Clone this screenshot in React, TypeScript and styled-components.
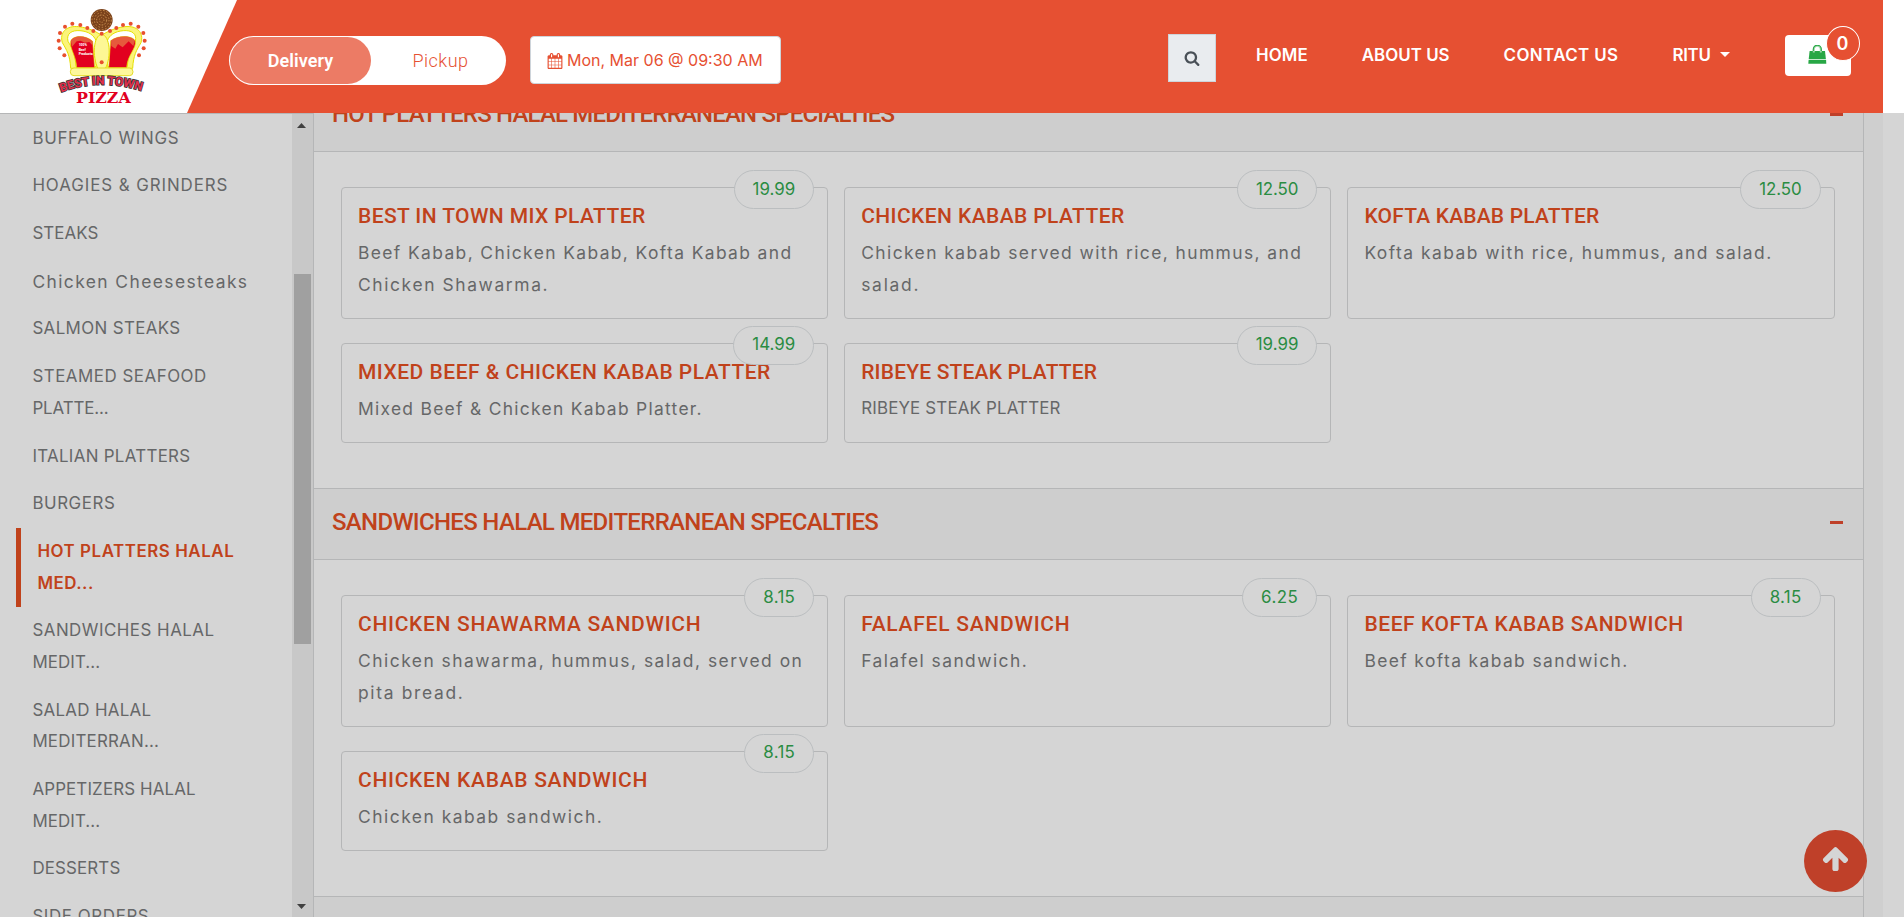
import React from 'react';
import styled, { createGlobalStyle, css } from 'styled-components';

const color = {
  brand: '#e65032',
  brandDim: '#bf4029',
  heading: '#c0421b',
  page: '#d5d5d5',
  bar: '#cecece',
  line: '#b5b6b7',
  text: '#666768',
  green: '#2a8c42',
};

const GlobalStyle = createGlobalStyle`
  *, *::before, *::after { box-sizing: border-box; }
  html, body { margin: 0; padding: 0; }
  body {
    background: ${color.page};
    font-family: Inter, 'Open Sans', sans-serif;
    overflow: hidden;
  }
`;

const Page = styled.div`
  display: flex;
  flex-direction: column;
  width: 1904px;
  height: 917px;
  overflow: hidden;
`;

/* ---------- header ---------- */

const HeaderStrip = styled.header`
  flex: none;
  height: 113px;
  padding-right: 21px;
  background: #fff;
`;

const HeaderBar = styled.div`
  display: flex;
  align-items: flex-start;
  height: 100%;
  background: ${color.brand};
`;

const LogoPanel = styled.div`
  flex: none;
  width: 237px;
  height: 113px;
  padding-left: 50px;
  background: #fff;
  clip-path: polygon(0 0, 100% 0, 187px 100%, 0 100%);
  margin-right: -8px;
`;

const Toggle = styled.div`
  z-index: 1;
  display: flex;
  width: 277px;
  height: 49px;
  margin-top: 36px;
  padding: 1px;
  border-radius: 25px;
  background: #fff;
`;

const ToggleOption = styled.div<{ $active?: boolean }>`
  display: flex;
  flex: none;
  align-items: center;
  justify-content: center;
  width: ${p => (p.$active ? 141 : 139)}px;
  height: 47px;
  padding-bottom: 1px;
  border-radius: 24px;
  font-family: Roboto, sans-serif;
  font-size: 18px;
  font-weight: ${p => (p.$active ? 600 : 300)};
  letter-spacing: ${p => (p.$active ? 0.1 : 0.48)}px;
  color: ${p => (p.$active ? '#fff' : color.brand)};
  background: ${p => (p.$active ? '#ec7b65' : 'transparent')};
`;

const DateButton = styled.div`
  display: flex;
  align-items: center;
  gap: 4px;
  width: 251px;
  height: 48px;
  margin: 36px 0 0 24px;
  padding: 0 0 1px 16px;
  border: 1px solid #ced4da;
  border-radius: 4px;
  background: #fff;
  color: ${color.brand};
  font-size: 16px;
  white-space: nowrap;

  svg { margin-top: 3px; }
`;

const SearchButton = styled.div`
  display: flex;
  align-items: center;
  justify-content: center;
  width: 48px;
  height: 48px;
  margin: 34px 40px 0 387px;
  border: 1px solid #ced4da;
  background: #e9ecef;
  color: #495057;
`;

const Nav = styled.nav`
  display: flex;
  gap: 54px;
  width: 529px;
  margin-top: 43px;
`;

const NavItem = styled.span<{ $track: number }>`
  display: flex;
  align-items: center;
  height: 24px;
  font-size: 16.9px;
  font-weight: 600;
  letter-spacing: ${p => p.$track}px;
  white-space: nowrap;
  color: #fff;
`;

const Caret = styled.i`
  margin: 0 0 1px 9px;
  border: 5px solid transparent;
  border-top-color: #fff;
  border-bottom: 0;
`;

const CartButton = styled.div`
  position: relative;
  width: 66px;
  height: 41px;
  margin-top: 35px;
  padding: 10px 0 0 23px;
  border-radius: 4px;
  background: #fff;
`;

const CartBadge = styled.span`
  position: absolute;
  top: -9px;
  right: -9px;
  display: flex;
  align-items: center;
  justify-content: center;
  width: 34px;
  height: 35px;
  padding-right: 1px;
  border: 1px solid #fff;
  border-radius: 50%;
  background: ${color.brand};
  color: #fff;
  font-size: 18px;
  font-weight: 600;
`;

/* ---------- body ---------- */

const Body = styled.div`
  display: flex;
  flex: 1;
  min-height: 0;
`;

const Sidebar = styled.aside`
  display: flex;
  flex: none;
  width: 313px;
  border-top: 1px solid ${color.line};
`;

const CategoryList = styled.ul`
  flex: none;
  width: 292px;
  margin: 0;
  padding: 0.7px 0 0 16px;
  list-style: none;
  overflow: hidden;
`;

const Category = styled.li<{ $active?: boolean }>`
  padding: 8px 0 8px 16.4px;
  font-size: 16.9px;
  line-height: 31.68px;
  color: ${color.text};
  ${p =>
    p.$active &&
    css`
      border-left: 5px solid ${color.heading};
      font-weight: 600;
      color: ${color.heading};
    `}
`;

const Line = styled.span<{ $track: number; $size?: number }>`
  display: block;
  letter-spacing: ${p => p.$track}px;
  font-size: ${p => p.$size ?? 16.9}px;
  white-space: nowrap;
`;

const ScrollTrack = styled.div`
  display: flex;
  flex-direction: column;
  align-items: center;
  width: 21px;
  padding: 9px 2px 8px 0;
  background: #c8c8c8;
`;

const ScrollArrow = styled.i<{ $down?: boolean }>`
  width: 9px;
  height: 5px;
  background: #404040;
  clip-path: ${p => (p.$down ? 'polygon(0 0, 100% 0, 50% 100%)' : 'polygon(50% 0, 100% 100%, 0 100%)')};
`;

const ScrollThumb = styled.div`
  width: 17px;
  height: 370px;
  margin: 146px 0 auto 2px;
  background: #a0a0a0;
`;

const Panel = styled.main`
  flex: none;
  width: 1551px;
  border: solid ${color.line};
  border-width: 0 1px;
  overflow: hidden;
`;

const Sections = styled.div`
  margin-top: -33px;
`;

const Gutter = styled.div`
  width: 19px;
  background: #cfcfcf;
`;

const Section = styled.section`
  height: 408px;
`;

const SectionHeader = styled.div`
  display: flex;
  align-items: center;
  justify-content: space-between;
  height: 72px;
  padding: 0 20.5px 4px 18px;
  border: solid ${color.line};
  border-width: 1px 0;
  background: ${color.bar};
`;

const SectionTitle = styled.h2<{ $track: number }>`
  margin: 0;
  font-family: Roboto, sans-serif;
  font-size: 24px;
  font-weight: 500;
  letter-spacing: ${p => p.$track}px;
  white-space: nowrap;
  color: ${color.heading};
`;

const Minus = styled.i`
  width: 12.5px;
  height: 3.5px;
  margin-top: 1px;
  background: ${color.brandDim};
`;

const CardGrid = styled.div`
  display: grid;
  grid-template-columns: repeat(3, 487.2px);
  gap: 24px 16px;
  padding: 35px 0 0 27px;
`;

const Card = styled.article`
  position: relative;
  padding: 16px 14px 17.5px 16px;
  border: 1px solid ${color.line};
  border-radius: 4px;
`;

const CardTitle = styled.h3<{ $track: number }>`
  margin: 0 0 9px;
  font-family: Roboto, sans-serif;
  font-size: 21px;
  font-weight: 500;
  line-height: 24px;
  letter-spacing: ${p => p.$track}px;
  white-space: nowrap;
  color: ${color.heading};
`;

const CardText = styled.div`
  line-height: 31.68px;
  color: ${color.text};
`;

const Price = styled.span<{ $track: number }>`
  position: absolute;
  top: -18px;
  right: 13px;
  display: flex;
  align-items: center;
  height: 39px;
  padding: 0 18px 2px;
  border: 1px solid #bbbec0;
  border-radius: 20px;
  background: ${color.page};
  font-size: 16.9px;
  letter-spacing: ${p => p.$track}px;
  color: ${color.green};
`;

const ToTop = styled.div`
  position: absolute;
  left: 1804px;
  top: 830px;
  display: flex;
  align-items: center;
  justify-content: center;
  width: 63px;
  height: 62px;
  padding-bottom: 6px;
  border-radius: 50%;
  background: ${color.brandDim};
  color: ${color.page};
`;

/* ---------- drawings ---------- */

const Logo = () => (
  <svg width="110" height="113" viewBox="0 0 330 339">
    <path d="M62 205 C60 165 50 150 37 128 C28 98 48 76 86 80 C118 84 140 96 155 106 C170 96 192 84 224 80 C262 76 282 98 273 128 C260 150 250 165 248 205 Z" fill="#fbf47a" stroke="#e6e000" strokeWidth="3" />
    <path d="M78 200 C76 160 64 140 54 124 C48 100 66 90 90 92 C116 94 132 106 138 122 L138 200 Z" fill="#fff" stroke="#e6e000" strokeWidth="3" />
    <path d="M232 200 C234 160 246 140 256 124 C262 100 244 90 220 92 C194 94 178 106 172 122 L172 200 Z" fill="#fff" stroke="#e6e000" strokeWidth="3" />
    <path d="M80 203 C78 165 58 145 62 124 C66 106 108 104 128 124 L134 203 Z" fill="#e2001f" stroke="#e6e000" strokeWidth="2" />
    <path d="M230 203 C232 165 260 145 256 124 C250 106 206 104 182 122 L176 203 Z" fill="#e2001f" stroke="#e6e000" strokeWidth="2" />
    <path d="M63 124 C68 106 108 104 127 124 L127 136 L118 126 L104 128 L92 122 L80 124 L66 140 Z" fill="#e65a3c" />
    <path d="M254 124 C248 106 206 104 183 122 L184 138 L196 146 L204 132 L218 142 L236 124 L250 138 Z" fill="#e65a3c" />
    <path d="M155 103 C180 106 185 170 166 206 L144 206 C126 170 130 106 155 103 Z" fill="#fdf795" stroke="#e6e000" strokeWidth="3" />
    <rect x="61" y="204" width="188" height="23" rx="11" fill="#fdf79c" stroke="#e3dc28" strokeWidth="3" />
    <circle cx="155" cy="60" r="33" fill="#7a421b" />
    <circle cx="155" cy="60" r="29" fill="none" stroke="#c98d4d" strokeWidth="3" strokeDasharray="5 5" />
    <circle cx="155" cy="60" r="22" fill="none" stroke="#c98d4d" strokeWidth="3" strokeDasharray="4 6" />
    <circle cx="155" cy="60" r="15" fill="none" stroke="#d39a58" strokeWidth="3" strokeDasharray="5 4" />
    <circle cx="155" cy="60" r="7" fill="none" stroke="#c98d4d" strokeWidth="3" strokeDasharray="3 4" />
    <g fill="#e8502d">
      {[[43, 166], [29, 145], [26, 122], [30, 99], [45, 80], [67, 71], [91, 75], [112, 84], [130, 93], [155, 101], [180, 93], [199, 84], [219, 75], [242, 71], [265, 80], [280, 99], [284, 122], [281, 145], [267, 166], [155, 187]].map(([x, y]) => (
        <circle key={`${x}-${y}`} cx={x} cy={y} r="6" />
      ))}
    </g>
    <g fill="#fff" fontFamily="Roboto, sans-serif" fontSize="10" fontWeight="800">
      <text x="86" y="138">100%</text>
      <text x="86" y="152">Beef</text>
      <text x="86" y="166" textLength="42" lengthAdjust="spacingAndGlyphs">Products</text>
    </g>
    <defs>
      <path id="arch" d="M33 277 Q155 232 281 275" />
    </defs>
    <text fill="#e5304c" stroke="#3a3436" strokeWidth="5" paintOrder="stroke" fontFamily="Roboto, sans-serif" fontSize="36" fontWeight="700">
      <textPath href="#arch" textLength="246" lengthAdjust="spacingAndGlyphs">BEST IN TOWN</textPath>
    </text>
    <text x="78" y="308" fill="#e2001f" fontFamily="'DejaVu Serif', serif" fontSize="43" fontWeight="700" textLength="164" lengthAdjust="spacingAndGlyphs">
      PIZZA
    </text>
  </svg>
);

const Glyph = ({ size, d }: { size: number; d: string }) => (
  <svg width={size} height={size} viewBox="0 0 1792 1792" fill="currentColor">
    <path d={d} />
  </svg>
);

const calendarPath =
  'M192 1664h288v-288h-288v288zm352 0h320v-288h-320v288zm-352-352h288v-320h-288v320zm352 0h320v-320h-320v320zm-352-384h288v-288h-288v288zm736 736h320v-288h-320v288zm-384-736h320v-288h-320v288zm768 736h288v-288h-288v288zm-384-352h320v-320h-320v320zm-352-864v-288q0-13-9.5-22.5t-22.5-9.5h-64q-13 0-22.5 9.5t-9.5 22.5v288q0 13 9.5 22.5t22.5 9.5h64q13 0 22.5-9.5t9.5-22.5zm736 864h288v-320h-288v320zm-384-384h320v-288h-320v288zm384 0h288v-288h-288v288zm32-480v-288q0-13-9.5-22.5t-22.5-9.5h-64q-13 0-22.5 9.5t-9.5 22.5v288q0 13 9.5 22.5t22.5 9.5h64q13 0 22.5-9.5t9.5-22.5zm384-64v1280q0 52-38 90t-90 38h-1408q-52 0-90-38t-38-90v-1280q0-52 38-90t90-38h128v-96q0-66 47-113t113-47h64q66 0 113 47t47 113v96h384v-96q0-66 47-113t113-47h64q66 0 113 47t47 113v96h128q52 0 90 38t38 90z';
const searchPath =
  'M1216 832q0-185-131.5-316.5t-316.5-131.5-316.5 131.5-131.5 316.5 131.5 316.5 316.5 131.5 316.5-131.5 131.5-316.5zm512 832q0 52-38 90t-90 38q-54 0-90-38l-343-342q-179 124-399 124-143 0-273.5-55.5t-225-150-150-225-55.5-273.5 55.5-273.5 150-225 225-150 273.5-55.5 273.5 55.5 225 150 150 225 55.5 273.5q0 220-124 399l343 343q37 37 37 90z';
const arrowUpPath =
  'M1675 971q0 51-37 90l-75 75q-38 38-91 38-54 0-90-38l-294-293v704q0 52-37.5 84.5t-90.5 32.5h-128q-53 0-90.5-32.5t-37.5-84.5v-704l-294 293q-36 38-90 38t-90-38l-75-75q-38-38-38-90 0-53 38-91l651-651q35-37 90-37 54 0 91 37l651 651q37 39 37 91z';

const BagIcon = () => (
  <svg width="19" height="19" viewBox="0 0 19 19">
    <path d="M1.6 6H17l.9 8.2H.7Z" fill="#28a745" />
    <path d="M.6 15.1h17.5l.2 3.6H.3Z" fill="#28a745" />
    <path d="M5.8 7.5V4.2a3.5 3.5 0 0 1 7 0V7.5" fill="none" stroke="#9fd8ab" strokeWidth="2" />
    <path d="M5.3 6V4.2a4 4 0 0 1 8 0V6" fill="none" stroke="#28a745" strokeWidth="1.1" />
  </svg>
);

/* ---------- data: every text carries its own tracking ---------- */

type Text = [text: string, track: number];

const nav: Text[] = [['HOME', 0.1], ['ABOUT US', 0.02], ['CONTACT US', 0.4]];

const categories: { lines: Text[]; active?: boolean; size?: number }[] = [
  { lines: [['BUFFALO WINGS', 0.7]] },
  { lines: [['HOAGIES & GRINDERS', 0.93]] },
  { lines: [['STEAKS', 0.1]] },
  { lines: [['Chicken Cheesesteaks', 1.42]], size: 17.4 },
  { lines: [['SALMON STEAKS', 0.38]] },
  { lines: [['STEAMED SEAFOOD', 0.52], ['PLATTE...', -0.1]] },
  { lines: [['ITALIAN PLATTERS', 0.31]] },
  { lines: [['BURGERS', 0.57]] },
  { lines: [['HOT PLATTERS HALAL', 0.56], ['MED...', 0.5]], active: true },
  { lines: [['SANDWICHES HALAL', 0.5], ['MEDIT...', 0.1]] },
  { lines: [['SALAD HALAL', 0.31], ['MEDITERRAN...', 0.22]] },
  { lines: [['APPETIZERS HALAL', 0.15], ['MEDIT...', 0.1]] },
  { lines: [['DESSERTS', 0.15]] },
  { lines: [['SIDE ORDERS', 0.6]] },
];

type Item = { title: Text; price: Text; lines: Text[]; size?: number };

const sections: { title: Text; items: Item[] }[] = [
  {
    title: ['HOT PLATTERS HALAL MEDITERRANEAN SPECIALTIES', -0.81],
    items: [
      { title: ['BEST IN TOWN MIX PLATTER', 0.4], price: ['19.99', 0], lines: [['Beef Kabab, Chicken Kabab, Kofta Kabab and', 1.4], ['Chicken Shawarma.', 1.62]] },
      { title: ['CHICKEN KABAB PLATTER', 0.41], price: ['12.50', -0.06], lines: [['Chicken kabab served with rice, hummus, and', 1.43], ['salad.', 1.75]] },
      { title: ['KOFTA KABAB PLATTER', 0.19], price: ['12.50', -0.06], lines: [['Kofta kabab with rice, hummus, and salad.', 1.47]] },
      { title: ['MIXED BEEF & CHICKEN KABAB PLATTER', 0.5], price: ['14.99', 0], lines: [['Mixed Beef & Chicken Kabab Platter.', 1.3]] },
      { title: ['RIBEYE STEAK PLATTER', 0.18], price: ['19.99', 0], lines: [['RIBEYE STEAK PLATTER', 0.17]], size: 16.9 },
    ],
  },
  {
    title: ['SANDWICHES HALAL MEDITERRANEAN SPECALTIES', -0.68],
    items: [
      { title: ['CHICKEN SHAWARMA SANDWICH', 0.7], price: ['8.15', 0.3], lines: [['Chicken shawarma, hummus, salad, served on', 1.5], ['pita bread.', 1.68]] },
      { title: ['FALAFEL SANDWICH', 0.74], price: ['6.25', 0.5], lines: [['Falafel sandwich.', 1.45]] },
      { title: ['BEEF KOFTA KABAB SANDWICH', 0.57], price: ['8.15', 0.3], lines: [['Beef kofta kabab sandwich.', 1.4]] },
      { title: ['CHICKEN KABAB SANDWICH', 0.7], price: ['8.15', 0.3], lines: [['Chicken kabab sandwich.', 1.51]] },
    ],
  },
];

const MenuCard = ({ item }: { item: Item }) => (
  <Card>
    <CardTitle $track={item.title[1]}>{item.title[0]}</CardTitle>
    <CardText>
      {item.lines.map(([text, track]) => (
        <Line key={text} $track={track} $size={item.size ?? 17.4}>{text}</Line>
      ))}
    </CardText>
    <Price $track={item.price[1]}>{item.price[0]}</Price>
  </Card>
);

export default function App() {
  return (
    <Page>
      <GlobalStyle />
      <HeaderStrip>
        <HeaderBar>
          <LogoPanel><Logo /></LogoPanel>
          <Toggle>
            <ToggleOption $active>Delivery</ToggleOption>
            <ToggleOption>Pickup</ToggleOption>
          </Toggle>
          <DateButton>
            <Glyph size={16} d={calendarPath} />
            Mon, Mar 06 @ 09:30 AM
          </DateButton>
          <SearchButton><Glyph size={16} d={searchPath} /></SearchButton>
          <Nav>
            {nav.map(([text, track]) => (
              <NavItem key={text} $track={track}>{text}</NavItem>
            ))}
            <NavItem $track={-0.26}>RITU<Caret /></NavItem>
          </Nav>
          <CartButton>
            <BagIcon />
            <CartBadge>0</CartBadge>
          </CartButton>
        </HeaderBar>
      </HeaderStrip>
      <Body>
        <Sidebar>
          <CategoryList>
            {categories.map(({ lines, active, size }, index) => (
              <Category key={index} $active={active}>
                {lines.map(([text, track]) => (
                  <Line key={text} $track={track} $size={size}>{text}</Line>
                ))}
              </Category>
            ))}
          </CategoryList>
          <ScrollTrack>
            <ScrollArrow />
            <ScrollThumb />
            <ScrollArrow $down />
          </ScrollTrack>
        </Sidebar>
        <Panel>
          <Sections>
            {sections.map(({ title, items }) => (
              <Section key={title[0]}>
                <SectionHeader>
                  <SectionTitle $track={title[1]}>{title[0]}</SectionTitle>
                  <Minus />
                </SectionHeader>
                <CardGrid>
                  {items.map(item => <MenuCard key={item.title[0]} item={item} />)}
                </CardGrid>
              </Section>
            ))}
            <SectionHeader />
          </Sections>
        </Panel>
        <Gutter />
      </Body>
      <ToTop><Glyph size={29} d={arrowUpPath} /></ToTop>
    </Page>
  );
}
